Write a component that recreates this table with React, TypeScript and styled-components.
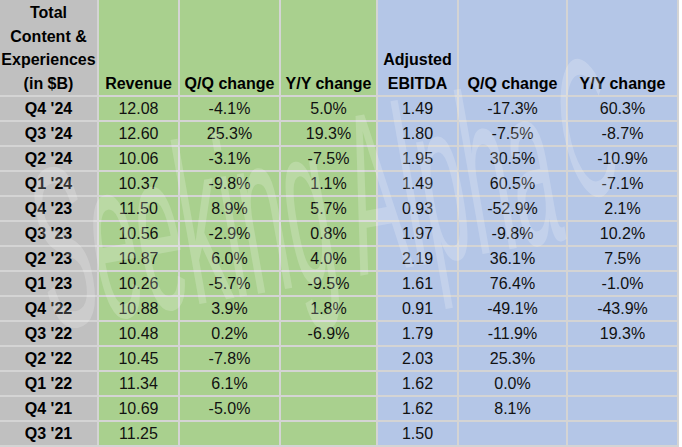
import React from "react";
import styled, { createGlobalStyle } from "styled-components";

const Global = createGlobalStyle`
  html, body { margin: 0; padding: 0; background: #ffffff; }
  body { font-family: "Liberation Sans", Arial, sans-serif; }
`;

type Tone = "gray" | "green" | "blue";

const toneColor: Record<Tone, string> = {
  gray: "#c0c0c0",
  green: "#a9d08e",
  blue: "#b4c6e7",
};

const Frame = styled.div`
  position: relative;
  width: 682px;
  height: 447px;
  overflow: hidden;
  background: #ffffff;
`;

const Sheet = styled.div`
  display: grid;
  grid-template-columns: 97px 79px 99px 95px 79px 107px 109px;
  grid-template-rows: 95px repeat(14, 23px);
  gap: 2px;
  width: max-content;
  padding: 0 2px 2px 0;
  background: #d4d4d4;
`;

const Cell = styled.div<{ $tone: Tone; $bold?: boolean }>`
  display: flex;
  align-items: center;
  justify-content: center;
  background: ${(p) => toneColor[p.$tone]};
  font-family: "Liberation Sans", Arial, sans-serif;
  font-size: 16px;
  font-weight: ${(p) => (p.$bold ? 700 : 400)};
  color: ${(p) => (p.$bold ? "#000000" : "#111111")};
  line-height: 23px;
  white-space: nowrap;
`;

const HeadCell = styled(Cell)`
  align-items: flex-end;
  text-align: center;
  line-height: 23.5px;
  white-space: pre-line;
`;

const Watermark = styled.div`
  position: absolute;
  left: 50px;
  top: 244px;
  display: flex;
  align-items: baseline;
  gap: 14px;
  font-family: "Liberation Sans", Arial, sans-serif;
  font-size: 100px;
  line-height: 100px;
  color: rgba(255, 255, 255, 0.2);
  white-space: nowrap;
  transform-origin: 0 84px;
  transform: rotate(-10deg) scale(0.82, 2.3);
  pointer-events: none;
`;

const LogoMark = styled.svg`
  width: 70px;
  height: 70px;
  align-self: flex-start;
  margin-top: 4px;
`;

const headers: { text: string; tone: Tone }[] = [
  { text: "Total\nContent &\nExperiences\n(in $B)", tone: "gray" },
  { text: "Revenue", tone: "green" },
  { text: "Q/Q change", tone: "green" },
  { text: "Y/Y change", tone: "green" },
  { text: "Adjusted\nEBITDA", tone: "blue" },
  { text: "Q/Q change", tone: "blue" },
  { text: "Y/Y change", tone: "blue" },
];

const rows: string[][] = [
  ["Q4 '24", "12.08", "-4.1%", "5.0%", "1.49", "-17.3%", "60.3%"],
  ["Q3 '24", "12.60", "25.3%", "19.3%", "1.80", "-7.5%", "-8.7%"],
  ["Q2 '24", "10.06", "-3.1%", "-7.5%", "1.95", "30.5%", "-10.9%"],
  ["Q1 '24", "10.37", "-9.8%", "1.1%", "1.49", "60.5%", "-7.1%"],
  ["Q4 '23", "11.50", "8.9%", "5.7%", "0.93", "-52.9%", "2.1%"],
  ["Q3 '23", "10.56", "-2.9%", "0.8%", "1.97", "-9.8%", "10.2%"],
  ["Q2 '23", "10.87", "6.0%", "4.0%", "2.19", "36.1%", "7.5%"],
  ["Q1 '23", "10.26", "-5.7%", "-9.5%", "1.61", "76.4%", "-1.0%"],
  ["Q4 '22", "10.88", "3.9%", "1.8%", "0.91", "-49.1%", "-43.9%"],
  ["Q3 '22", "10.48", "0.2%", "-6.9%", "1.79", "-11.9%", "19.3%"],
  ["Q2 '22", "10.45", "-7.8%", "", "2.03", "25.3%", ""],
  ["Q1 '22", "11.34", "6.1%", "", "1.62", "0.0%", ""],
  ["Q4 '21", "10.69", "-5.0%", "", "1.62", "8.1%", ""],
  ["Q3 '21", "11.25", "", "", "1.50", "", ""],
];

const toneFor = (i: number): Tone => (i === 0 ? "gray" : i <= 3 ? "green" : "blue");

export default function App() {
  return (
    <>
      <Global />
      <Frame>
        <Sheet>
          {headers.map((h, i) => (
            <HeadCell key={`h${i}`} $tone={h.tone} $bold>
              {h.text}
            </HeadCell>
          ))}
          {rows.map((r, ri) =>
            r.map((v, ci) => (
              <Cell key={`${ri}-${ci}`} $tone={toneFor(ci)} $bold={ci === 0}>
                {v}
              </Cell>
            ))
          )}
        </Sheet>
        <Watermark aria-hidden>
          <span>Seeking Alpha</span>
          <LogoMark viewBox="0 0 70 70">
            <path
              d="M58 20 A27 27 0 1 0 58 50"
              fill="none"
              stroke="rgba(255,255,255,0.2)"
              strokeWidth="7"
            />
          </LogoMark>
        </Watermark>
      </Frame>
    </>
  );
}
